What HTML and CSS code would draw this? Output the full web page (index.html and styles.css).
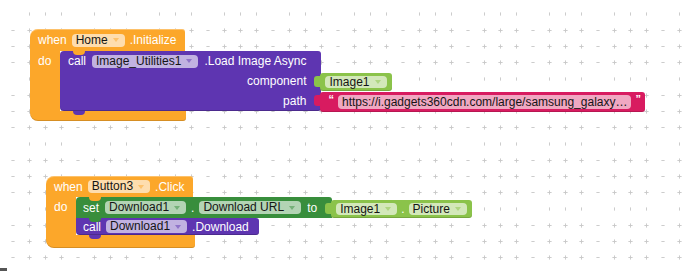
FILE: index.html
```html
<!DOCTYPE html>
<html lang="en">
<head>
    <meta charset="UTF-8">
    <meta name="viewport" content="width=device-width, initial-scale=1.0">
    <title>Blocks</title>
    <link rel="stylesheet" href="styles.css">
</head>
<body>
    <div class="workspace">

        <!-- when Home.Initialize -->
        <div class="event orange ev-init">
            <div class="hat">
                <span class="lbl">when</span>
                <span class="field">Home<i class="arrow"></i></span>
                <span class="lbl">.Initialize</span>
            </div>
            <div class="mid">
                <div class="arm"><span class="lbl">do</span></div>
                <div class="stack">
                    <div class="stmt method purple">
                        <div class="body head">
                            <span class="lbl">call</span>
                            <span class="field">Image_Utilities1<i class="arrow"></i></span>
                            <span class="lbl">.Load Image Async</span>
                        </div>
                        <div class="slot"></div>
                        <div class="body input"><span class="lbl">component</span></div>
                        <div class="slot">
                            <div class="value lime">
                                <span class="field">Image1<i class="arrow"></i></span>
                            </div>
                        </div>
                        <div class="body input last"><span class="lbl">path</span></div>
                        <div class="slot">
                            <div class="value pink text">
                                <span class="quote">&ldquo;</span>
                                <span class="field">https://i.gadgets360cdn.com/large/samsung_galaxy…</span>
                                <span class="quote">&rdquo;</span>
                            </div>
                        </div>
                    </div>
                </div>
            </div>
            <div class="foot"></div>
        </div>

        <!-- when Button3.Click -->
        <div class="event orange ev-click">
            <div class="hat">
                <span class="lbl">when</span>
                <span class="field">Button3<i class="arrow"></i></span>
                <span class="lbl">.Click</span>
            </div>
            <div class="mid">
                <div class="arm"><span class="lbl">do</span></div>
                <div class="stack">
                    <div class="stmt setter green">
                        <div class="body row">
                            <span class="lbl">set</span>
                            <span class="field">Download1<i class="arrow"></i></span>
                            <span class="lbl dot">.</span>
                            <span class="field">Download URL<i class="arrow"></i></span>
                            <span class="lbl">to</span>
                        </div>
                        <div class="value lime">
                            <span class="field">Image1<i class="arrow"></i></span>
                            <span class="lbl dot">.</span>
                            <span class="field">Picture<i class="arrow"></i></span>
                        </div>
                    </div>
                    <div class="stmt purple">
                        <div class="body row short">
                            <span class="lbl">call</span>
                            <span class="field">Download1<i class="arrow"></i></span>
                            <span class="lbl">.Download</span>
                        </div>
                    </div>
                </div>
            </div>
            <div class="foot"></div>
        </div>

    </div>
    <div class="corner"></div>
</body>
</html>
```

FILE: styles.css
```css
html, body {
    margin: 0;
    height: 100%;
}
body {
    width: 690px;
    height: 271px;
    overflow: hidden;
    position: relative;
    font-family: "Liberation Sans", Arial, sans-serif;
    font-size: 12px;
    background-color: #fff;
    background-image: url("data:image/svg+xml,%3Csvg xmlns='http://www.w3.org/2000/svg' width='20' height='20'%3E%3Cpath d='M7.5 10h5M10 7.5v5' stroke='%23c8c8c8' stroke-width='1.1'/%3E%3C/svg%3E");
    background-size: 16.25px 16.25px;
    background-position: 4.875px 5.875px;
}

.workspace {
    display: flex;
    flex-direction: column;
    align-items: flex-start;
    padding: 29px 0 0 30px;
}

/* colours */
.orange { --c: #fca72a; }
.purple { --c: #5e35b1; }
.green  { --c: #388e3c; }
.lime   { --c: #8bc34a; }
.pink   { --c: #d81b60; }

.lbl {
    color: #fff;
    white-space: nowrap;
    line-height: 16px;
}
.lbl.dot {
    margin: 0 -1px;
}

.field {
    display: inline-flex;
    align-items: center;
    gap: 5px;
    height: 13px;
    padding: 0 6px 0 4px;
    border-radius: 4px;
    background: rgba(255, 255, 255, 0.62);
    color: #151515;
    white-space: nowrap;
    line-height: 13px;
}
.arrow {
    width: 0;
    height: 0;
    border-left: 3px solid transparent;
    border-right: 3px solid transparent;
    border-top: 4px solid var(--c);
    opacity: 0.5;
}

/* event blocks */
.event {
    display: flex;
    flex-direction: column;
    align-items: flex-start;
}
.hat {
    position: relative;
    display: flex;
    align-items: center;
    gap: 5px;
    height: 21px;
    padding: 0 9px 0 8px;
    background: var(--c);
    border-radius: 8px 3px 0 0;
    box-shadow: inset 0 1px 0 rgba(255, 255, 255, 0.3);
}
.ev-init .hat {
    height: 22px;
}
.hat::after {
    content: "";
    position: absolute;
    left: 43px;
    top: 100%;
    width: 12px;
    height: 4px;
    background: var(--c);
    border-radius: 0 0 4px 4px;
    z-index: 2;
}
.mid {
    display: flex;
}
.arm {
    width: 30px;
    padding: 2px 0 0 8px;
    box-sizing: border-box;
    background: var(--c);
}
.stack {
    display: flex;
    flex-direction: column;
    align-items: flex-start;
}
.foot {
    height: 10px;
    background: var(--c);
    border-radius: 0 0 3px 8px;
    box-shadow: inset 0 -1px 0 rgba(0, 0, 0, 0.15);
}
.ev-init .foot { width: 156px; }
.ev-click {
    margin: 55px 0 0 16px;
}
.ev-click .foot {
    width: 149px;
    height: 13px;
}

/* statement blocks */
.stmt {
    position: relative;
}
.stmt::after {
    content: "";
    position: absolute;
    left: 13px;
    top: 100%;
    width: 12px;
    height: 4px;
    background: var(--c);
    border-radius: 0 0 4px 4px;
    z-index: 2;
}
.body {
    background: var(--c);
}

.method {
    display: grid;
    grid-template-columns: auto auto;
    grid-auto-rows: 20px;
}
.method .head {
    display: flex;
    align-items: center;
    gap: 6px;
    padding: 0 15px 0 8px;
    border-radius: 4px 3px 0 0;
}
.method .input {
    display: flex;
    justify-content: flex-end;
    align-items: center;
    padding-right: 15px;
}
.method .input.last {
    border-radius: 0 0 3px 4px;
    box-shadow: inset 0 -1px 0 rgba(0, 0, 0, 0.2);
}
.slot {
    display: flex;
    align-items: flex-start;
}

.setter {
    display: flex;
    align-items: flex-start;
}
.row {
    display: flex;
    align-items: center;
    gap: 6px;
    height: 21px;
    padding: 0 15px 0 7px;
    border-radius: 4px 3px 0 0;
}
.row.short {
    height: 17px;
    padding-right: 10px;
    gap: 5px;
    border-radius: 0 3px 3px 4px;
    box-shadow: inset 0 -1px 0 rgba(0, 0, 0, 0.2);
}

/* value blocks */
.value {
    position: relative;
    display: flex;
    align-items: center;
    gap: 5px;
    height: 18px;
    margin: 2px 0 0 -1px;
    padding: 0 5px;
    background: var(--c);
    border-radius: 3px;
    box-shadow: inset 0 -1px 0 rgba(0, 0, 0, 0.15);
}
.value::before {
    content: "";
    position: absolute;
    left: -6px;
    top: 3px;
    width: 7px;
    height: 11px;
    background: var(--c);
    border-radius: 3px 0 0 3px;
}
.value .field {
    height: 12px;
    line-height: 12px;
}
.setter .value {
    margin-top: 3px;
}
.text {
    height: 20px;
    margin-top: 1px;
    padding: 0 4px 0 8px;
    gap: 4px;
}
.text .field {
    height: 14px;
    padding: 0 4px;
}
.quote {
    align-self: flex-start;
    color: #fff;
    font-weight: bold;
    font-size: 11px;
    line-height: 14px;
}

.corner {
    position: absolute;
    left: 0;
    bottom: 0;
    width: 7px;
    height: 3px;
    background: #555;
}
```
